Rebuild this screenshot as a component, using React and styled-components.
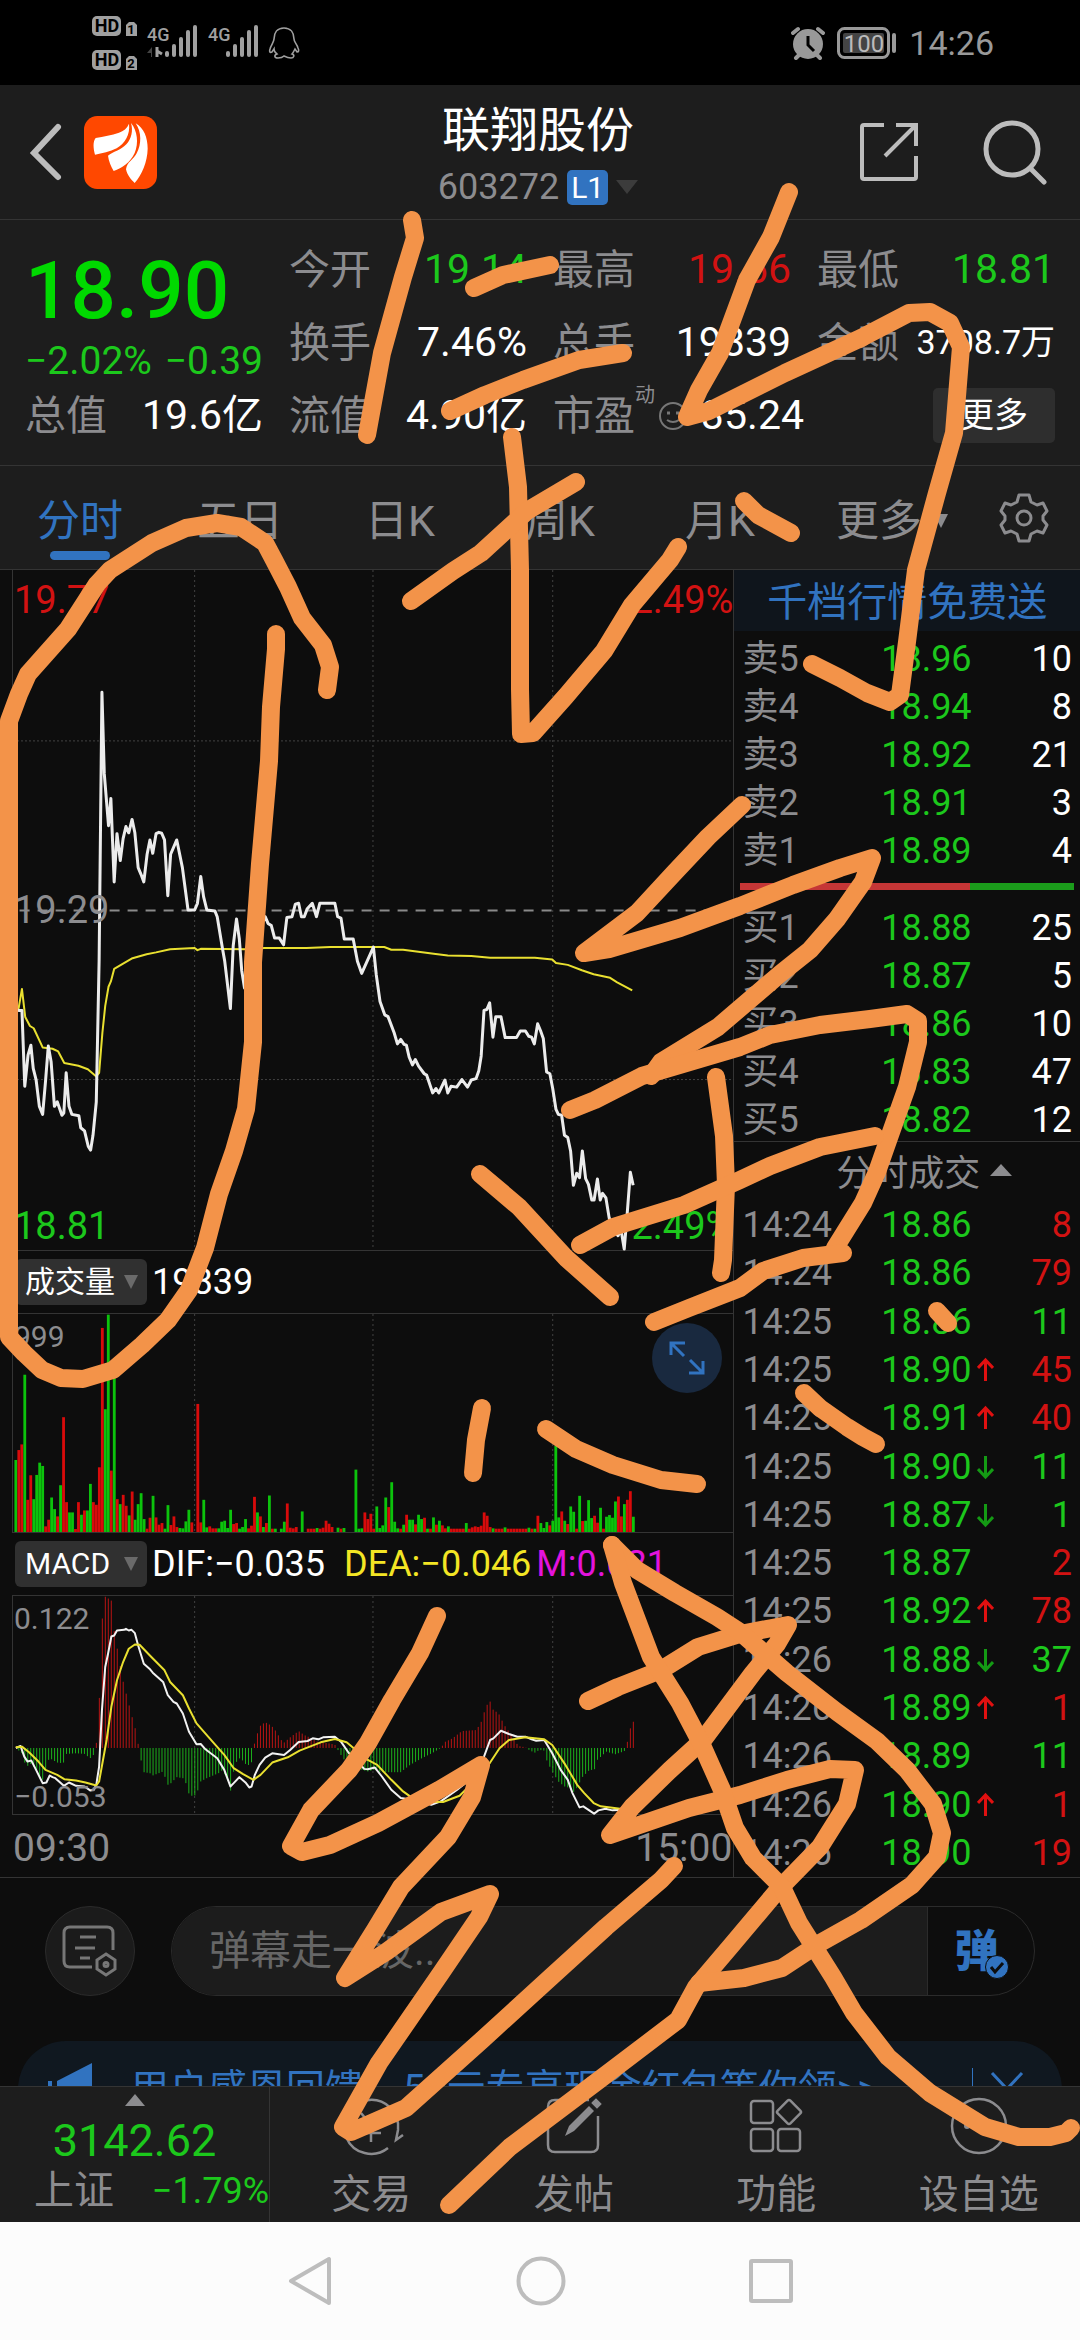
import React from "react";
import styled, { createGlobalStyle } from "styled-components";

const c = {
  bar: "#1d1d1d",
  base: "#0d0d0d",
  line: "#343434",
  grey: "#8c8c8f",
  green: "#1cc81c",
  red: "#d21212",
  blue: "#3173c0",
  icon: "#bcbcbc",
  ink: "#f39349",
};

const GlobalStyle = createGlobalStyle`
  *, *::before, *::after { box-sizing: border-box; }
  body { margin: 0; background: ${c.base}; }
  button, input { font: inherit; color: inherit; border: 0; padding: 0; margin: 0; background: none; }
`;

const Page = styled.div`
  position: relative;
  display: flex;
  flex-direction: column;
  min-height: 100vh;
  overflow: hidden;
  background: ${c.base};
  color: #fff;
  font-family: Roboto, "Noto Sans CJK SC", sans-serif;
  font-size: 36px;
`;

/* ---------- status bar ---------- */

const StatusBar = styled.div`
  display: flex;
  align-items: center;
  justify-content: space-between;
  height: 85px;
  padding: 0 86px 0 92px;
  background: #000;
  color: #999;
  font-size: 34px;
`;

const StatusGroup = styled.div`
  display: flex;
  align-items: center;
  gap: 12px;
`;

/* ---------- header ---------- */

const Header = styled.header`
  display: grid;
  grid-template-columns: 1fr auto 1fr;
  align-items: center;
  height: 135px;
  padding: 0 32px 0 28px;
  background: ${c.bar};
  border-bottom: 1px solid ${c.line};
`;

const HeaderSide = styled.div`
  display: flex;
  align-items: center;
  justify-content: ${(p) => (p.$end ? "flex-end" : "flex-start")};
  gap: ${(p) => (p.$end ? "64px" : "20px")};
`;

const IconButton = styled.button`
  display: flex;
  align-items: center;
  justify-content: center;
`;

const TitleBlock = styled.div`
  display: flex;
  flex-direction: column;
  align-items: center;
  padding-top: 6px;
`;

const Title = styled.h1`
  margin: 0;
  font-size: 48px;
  line-height: 64px;
  font-weight: 400;
`;

const CodeLine = styled.div`
  display: flex;
  align-items: center;
  gap: 8px;
  line-height: 48px;
  color: ${c.grey};
`;

const Level = styled.span`
  padding: 0 4px;
  border-radius: 5px;
  background: ${c.blue};
  color: #fff;
  font-size: 30px;
  line-height: 35px;
`;

const Caret = styled.span`
  width: 0;
  height: 0;
  border: ${(p) => p.$size || 7}px solid transparent;
  ${(p) =>
    p.$up
      ? `border-bottom: 12px solid ${p.$color || c.grey}; border-top: 0;`
      : `border-top: 14px solid ${p.$color || c.grey}; border-bottom: 0;`}
`;

/* ---------- quote ---------- */

const Quote = styled.section`
  display: grid;
  grid-template-columns: repeat(4, minmax(0, 1fr));
  grid-auto-rows: 73px;
  column-gap: 26px;
  padding: 13px 25px 13px;
  background: ${c.bar};
  border-bottom: 1px solid ${c.line};
`;

const PriceBlock = styled.div`
  grid-row: span 2;
  display: flex;
  flex-direction: column;
  white-space: nowrap;
`;

const Price = styled.div`
  color: #00d900;
  font-size: 80px;
  line-height: 116px;
  font-weight: 500;
`;

const Change = styled.div`
  display: flex;
  justify-content: space-between;
  color: ${c.green};
  font-size: 39px;
  line-height: 24px;
`;

const Fact = styled.div`
  display: flex;
  align-items: center;
  justify-content: ${(p) => (p.$start ? "flex-start" : "space-between")};
  white-space: nowrap;
`;

const FactLabel = styled.span`
  padding-bottom: 8px;
  color: ${c.grey};
  font-size: 41px;
`;

const FactValue = styled.span`
  color: ${(p) => p.$color || "#fff"};
  font-size: ${(p) => (p.$small ? "34px" : "41px")};
  line-height: 73px;
`;

const FactIcon = styled.svg`
  flex: none;
`;

const Sup = styled.sup`
  align-self: flex-start;
  color: ${c.grey};
  font-size: 20px;
  line-height: 32px;
`;

const MoreButton = styled.button`
  justify-self: end;
  align-self: center;
  width: 122px;
  height: 55px;
  border-radius: 5px;
  background: #2e2e2e;
  font-size: 34px;
  line-height: 55px;
`;

/* ---------- tabs ---------- */

const Tabs = styled.nav`
  display: grid;
  grid-template-columns: repeat(5, 20fr) 23fr 10fr;
  height: 104px;
  padding-right: 16px;
  background: ${c.bar};
  border-bottom: 1px solid ${c.line};
`;

const Tab = styled.button`
  display: flex;
  flex-direction: column;
  align-items: center;
  padding-top: 25px;
  color: ${(p) => (p.$active ? c.blue : c.grey)};
  font-size: 43px;
  line-height: 60px;
  &::after {
    content: "";
    width: 60px;
    height: 9px;
    border-radius: 5px;
    background: ${(p) => (p.$active ? c.blue : "transparent")};
  }
`;

const TabRow = styled.span`
  display: flex;
  align-items: center;
  gap: 12px;
`;

/* ---------- charts ---------- */

const Main = styled.main`
  display: grid;
  grid-template-columns: 68fr 32fr;
  border-bottom: 1px solid ${c.line};
`;

const Charts = styled.section`
  padding-left: 12px;
  border-right: 1px solid ${c.line};
`;

const ChartBox = styled.div`
  position: relative;
  height: ${(p) => p.$height}px;
  border: solid ${c.line};
  border-width: ${(p) => (p.$open ? "0 0 1px 1px" : "1px 0 1px 1px")};
`;

const Plot = styled.svg`
  display: block;
  width: 100%;
  height: 100%;
  overflow: visible;
`;

const Tag = styled.span`
  position: absolute;
  ${(p) => (p.$right ? "right: 0;" : "left: 1px;")}
  ${(p) => (p.$bottom ? "bottom: 2px;" : "top: 8px;")}
  color: ${(p) => p.$color || c.grey};
  font-size: ${(p) => (p.$small ? "30px" : "38px")};
  line-height: ${(p) => (p.$small ? "30px" : "44px")};
`;

const MidTag = styled(Tag)`
  top: 50%;
  transform: translateY(-50%);
`;

const Indicator = styled.div`
  display: flex;
  align-items: center;
  gap: 5px;
  height: 62px;
  white-space: nowrap;
`;

const Picker = styled.button`
  display: flex;
  align-items: center;
  justify-content: space-between;
  width: 132px;
  height: 46px;
  padding: 0 9px 0 10px;
  margin-left: 3px;
  border-radius: 6px;
  background: #303030;
  font-size: 30px;
  line-height: 42px;
`;

const Reading = styled.span`
  color: ${(p) => p.$color || "#fff"};
  margin-right: ${(p) => (p.$wide ? "14px" : "0")};
`;

const ExpandButton = styled.button`
  position: absolute;
  right: 11px;
  top: 9px;
  width: 70px;
  height: 70px;
  border-radius: 50%;
  background: #19293f;
  display: grid;
  place-items: center;
`;

const TimeAxis = styled.div`
  display: flex;
  justify-content: space-between;
  padding: 4px 1px 0;
  color: ${c.grey};
  font-size: 39px;
  line-height: 58px;
`;

/* ---------- order book ---------- */

const Side = styled.aside`
  display: flex;
  flex-direction: column;
`;

const Promo = styled.a`
  display: block;
  height: 61px;
  margin-bottom: 4px;
  background: #0f151c;
  color: ${c.blue};
  font-size: 40px;
  line-height: 66px;
  text-align: center;
  text-decoration: none;
  white-space: nowrap;
`;

const Table = styled.table`
  display: flex;
  flex-direction: column;
  flex: ${(p) => (p.$grow ? "1" : "none")};
  padding: 0 8px;
`;

const Body = styled.tbody`
  display: flex;
  flex-direction: column;
  flex: 1;
`;

const Row = styled.tr`
  display: grid;
  grid-template-columns: 8fr 7fr 4fr;
  align-items: center;
  flex: 1;
  min-height: 48px;
  line-height: 48px;
`;

const Cell = styled.td`
  display: flex;
  align-items: center;
  gap: 5px;
  padding: 0;
  color: ${(p) => p.$color || "#fff"};
  justify-content: ${(p) => (p.$end ? "flex-end" : "flex-start")};
`;

const Balance = styled.div`
  display: flex;
  height: 7px;
  margin: 8px 6px 14px;
`;

const BalancePart = styled.div`
  flex: ${(p) => p.$share};
  background: ${(p) => p.$color};
`;

const TradesHead = styled.button`
  display: flex;
  align-items: center;
  justify-content: center;
  gap: 10px;
  height: 60px;
  margin-top: -3px;
  padding: 0 0 4px 34px;
  border-top: 1px solid ${c.line};
  color: ${c.grey};
`;

/* ---------- comment bar, banner ---------- */

const Comment = styled.form`
  display: flex;
  gap: 36px;
  padding: 28px 45px 45px;
`;

const RoundButton = styled.button`
  display: grid;
  place-items: center;
  flex: none;
  width: 90px;
  height: 90px;
  border: 1px solid #2b2b2b;
  border-radius: 50%;
  background: #1b1b1b;
`;

const Pill = styled.div`
  display: flex;
  flex: 1;
  height: 90px;
  border: 1px solid #2b2b2b;
  border-radius: 45px;
  overflow: hidden;
`;

const CommentInput = styled.input`
  flex: 1;
  min-width: 0;
  padding-left: 37px;
  background: #1c1c1c;
  font-size: 41px;
  outline: 0;
  &::placeholder { color: #666; opacity: 1; }
`;

const BulletButton = styled.button`
  position: relative;
  width: 107px;
  padding: 0 9px 6px 0;
  border-left: 1px solid #2b2b2b;
  color: ${c.blue};
  font-size: 44px;
  font-weight: 900;
`;

const BulletCheck = styled.svg`
  position: absolute;
  left: 57px;
  top: 48px;
`;

const BannerClip = styled.div`
  height: 45px;
  padding: 0 18px;
  overflow: hidden;
`;

const Banner = styled.div`
  display: flex;
  align-items: center;
  height: 96px;
  padding: 0 38px 0 28px;
  border-radius: 48px;
  background: #101820;
  color: ${c.blue};
`;

const BannerLink = styled.a`
  flex: 1;
  margin-left: 36px;
  padding-bottom: 8px;
  color: inherit;
  font-size: 39px;
  text-decoration: none;
  white-space: nowrap;
`;

const Divider = styled.span`
  width: 1px;
  height: 42px;
  margin-right: 17px;
  background: ${c.blue};
`;

/* ---------- bottom navigation ---------- */

const BottomNav = styled.nav`
  display: grid;
  grid-template-columns: 4fr repeat(4, 3fr);
  height: 136px;
  background: ${c.bar};
  border-top: 1px solid ${c.line};
`;

const IndexButton = styled.button`
  display: flex;
  flex-direction: column;
  align-items: center;
  padding-top: 7px;
  border-right: 1px solid ${c.line};
  color: ${c.green};
`;

const IndexValue = styled.span`
  margin-top: 8px;
  font-size: 45px;
  line-height: 54px;
`;

const IndexRow = styled.span`
  display: flex;
  align-items: center;
  align-self: stretch;
  justify-content: space-between;
  padding-left: 34px;
  line-height: 46px;
`;

const NavItem = styled.button`
  display: flex;
  flex-direction: column;
  align-items: center;
  gap: 14px;
  padding-top: 10px;
  color: ${c.grey};
  font-size: 40px;
  line-height: 52px;
`;

const NavIcon = styled.svg`
  overflow: visible;
`;

const NavLabel = styled.span`
  color: ${c.grey};
  font-size: 40px;
`;

const SystemNav = styled.div`
  display: flex;
  align-items: center;
  justify-content: center;
  gap: 182px;
  flex: 1;
  min-height: 118px;
  background: #fcfcfc;
`;

const Ink = styled.svg`
  position: absolute;
  inset: 0;
  width: 100%;
  pointer-events: none;
`;

/* ---------- data ---------- */

const facts = [
  ["今开", "19.14", c.green],
  ["最高", "19.66", c.red],
  ["最低", "18.81", c.green],
  ["换手", "7.46%"],
  ["总手", "19839"],
  ["金额", "3708.7万", "#fff", true],
  ["总值", "19.6亿"],
  ["流值", "4.90亿"],
];

const sells = [
  ["卖5", "18.96", 10],
  ["卖4", "18.94", 8],
  ["卖3", "18.92", 21],
  ["卖2", "18.91", 3],
  ["卖1", "18.89", 4],
];
const buys = [
  ["买1", "18.88", 25],
  ["买2", "18.87", 5],
  ["买3", "18.86", 10],
  ["买4", "18.83", 47],
  ["买5", "18.82", 12],
];

const trades = [
  ["14:24", "18.86", "", 8, "r"],
  ["14:24", "18.86", "", 79, "r"],
  ["14:25", "18.86", "", 11, "g"],
  ["14:25", "18.90", "up", 45, "r"],
  ["14:25", "18.91", "up", 40, "r"],
  ["14:25", "18.90", "down", 11, "g"],
  ["14:25", "18.87", "down", 1, "g"],
  ["14:25", "18.87", "", 2, "r"],
  ["14:25", "18.92", "up", 78, "r"],
  ["14:26", "18.88", "down", 37, "g"],
  ["14:26", "18.89", "up", 1, "r"],
  ["14:26", "18.89", "", 11, "g"],
  ["14:26", "18.90", "up", 1, "r"],
  ["14:26", "18.90", "", 19, "r"],
];

const priceLine =
  "26,1005 38,1010 45,1010 51,1180 58,1110 64,1088 69,1140 75,1165 82,1225 89,1243 95,1170 101,1090 107,1125 114,1225 120,1215 130,1245 134,1240 139,1150 145,1225 151,1243 166,1246 170,1273 178,1280 186,1315 191,1323 196,1290 203,1215 209,900 215,297 220,480 229,596 234,535 241,722 247,614 254,674 260,625 266,598 272,612 279,582 285,612 292,690 298,705 304,722 311,660 317,628 323,658 330,614 336,611 342,613 348,628 355,753 361,660 374,628 386,690 398,785 412,785 418,770 425,710 431,755 438,785 455,787 460,800 471,870 476,900 488,1006 494,865 501,805 507,850 512,920 518,960 530,900 545,830 562,800 568,815 575,820 582,848 592,848 601,863 608,802 619,800 626,772 633,770 639,800 645,800 651,783 662,770 671,800 678,770 710,770 716,800 723,803 730,850 749,850 758,900 767,927 792,868 798,930 806,990 816,1020 823,1024 836,1060 843,1085 850,1075 857,1086 862,1088 868,1115 875,1132 881,1120 888,1135 900,1152 905,1155 918,1195 925,1185 931,1195 944,1166 950,1195 957,1180 969,1182 980,1165 992,1182 1000,1166 1010,1163 1016,1145 1021,1112 1027,1010 1033,1008 1039,993 1046,1070 1052,1024 1063,1024 1072,1071 1096,1071 1104,1056 1115,1056 1122,1068 1128,1070 1134,1085 1141,1040 1147,1055 1153,1073 1160,1148 1167,1152 1173,1185 1180,1232 1185,1243 1192,1245 1198,1290 1205,1295 1211,1325 1217,1402 1224,1375 1230,1385 1236,1325 1243,1387 1249,1400 1256,1435 1261,1435 1268,1388 1274,1435 1279,1420 1286,1430 1293,1475 1300,1500 1312,1515 1318,1500 1325,1545 1331,1470 1338,1373 1344,1402";

const averageLine =
  "26,1010 38,1005 45,962 52,1025 62,1045 70,1050 89,1093 110,1096 122,1102 135,1128 165,1134 185,1142 203,1158 209,1150 216,1060 222,1000 229,957 234,945 241,917 260,905 280,893 310,884 330,880 360,873 412,870 418,875 425,872 520,873 560,870 650,870 700,868 815,868 830,874 855,874 920,883 950,887 1000,888 1040,892 1135,892 1172,896 1180,904 1205,908 1235,920 1260,929 1295,937 1310,947 1342,965";

/* one entry a minute: positive is a falling minute, negative a rising one */
const volumes = [
  217, -247, -264, 474, -97, -171, 99, 172, 209, 199, -17, -37, 104, 69, -47, 141, -346, -90, 59, 59,
  -9, -90, 52, -65, 65, 145, -90, -82, -195, -615, 370, 655, -185, 477, -99, 84, -112, -79, 50, -122,
  37, 84, 117, 39, -10, -43, 109, -44, -22, -27, 10, 81, -21, -47, -15, 12, 11, 32, 67, -29,
  0, -386, -29, 97, 14, -17, -11, -11, 11, 31, 34, 12, 67, -24, -27, 10, 15, 39, -11, -19,
  -106, 59, -47, 15, -27, 110, -10, 10, 0, 10, 31, -86, -13, -11, -15, 0, 62, 0, -10, -10,
  -10, 12, -10, -13, -34, -25, -15, 0, 13, -10, 12, 0, 0, 0, 188, 10, 11, -59, -39, -55,
  -10, 77, 12, 20, 104, -75, 150, 31, 11, -10, 22, -52, 37, 37, -23, 52, 39, -43, 10, -10,
  44, -22, 34, -20, -11, 17, -10, -10, -10, -10, -10, 27, -10, -14, -17, -15, -19, -59, -49, -15,
  11, -10, -10, -10, 14, -10, -10, -10, -10, -10, -10, -10, 13, -10, 10, -49, 27, 12, 30, -20,
  34, 260, 44, -62, 34, -24, 77, 61, -10, 109, -33, 34, 96, 42, -49, -28, 73, -10, 46, 51,
  43, 92, -107, -47, 84, -97, -123, 46,
];

const macdEnvelope = [
  [32, 624], [45, 640], [51, 668], [57, 678], [64, 672], [76, 690], [83, 715], [89, 720], [95, 690], [101, 660],
  [108, 658], [120, 668], [133, 670], [139, 642], [160, 640], [178, 642], [190, 655], [197, 645], [201, 625], [203, 612],
  [209, 495], [215, 243], [222, 168], [228, 173], [235, 180], [241, 270], [247, 320], [253, 370], [260, 423], [266, 457],
  [279, 530], [285, 560], [292, 612], [296, 624], [298, 660], [304, 697], [317, 700], [323, 707], [345, 695], [355, 735],
  [362, 730], [374, 712], [387, 715], [393, 728], [399, 760], [406, 768], [412, 768], [418, 755], [425, 725], [438, 715],
  [463, 700], [469, 692], [480, 710], [488, 757], [494, 700], [500, 668], [507, 655], [513, 660], [520, 672], [532, 678],
  [535, 640], [537, 624], [539, 612], [545, 582], [551, 558], [558, 550], [566, 548], [577, 560], [583, 570], [596, 600],
  [602, 608], [615, 592], [633, 573], [645, 585], [653, 590], [672, 605], [697, 610], [710, 614], [714, 624], [723, 645],
  [735, 670], [750, 675], [767, 690], [780, 695], [800, 688], [806, 697], [850, 697], [870, 675], [895, 655], [920, 637],
  [935, 624], [945, 605], [960, 595], [980, 573], [1010, 570], [1020, 550], [1027, 518], [1033, 495], [1040, 484], [1046, 508],
  [1058, 520], [1070, 555], [1085, 585], [1100, 618], [1115, 622], [1125, 632], [1135, 638], [1145, 630], [1155, 632], [1160, 660],
  [1170, 690], [1185, 725], [1198, 740], [1211, 745], [1217, 757], [1224, 745], [1236, 712], [1250, 692], [1262, 688], [1268, 660],
  [1287, 635], [1306, 643], [1312, 640], [1325, 634], [1329, 624], [1331, 610], [1338, 565], [1345, 543],
];

const difLine =
  "32,624 42,618 50,650 57,665 65,662 75,690 89,730 97,728 104,707 110,712 116,715 134,738 145,728 160,738 178,740 190,752 198,750 203,735 209,680 215,510 222,380 228,340 235,288 241,285 247,270 262,268 266,265 272,270 278,268 285,278 292,315 304,370 316,385 323,397 345,425 355,465 367,485 374,490 387,520 400,575 416,613 425,612 435,628 460,655 475,690 488,740 495,730 507,712 520,728 528,743 533,740 540,705 550,675 562,653 577,640 602,645 615,630 633,606 652,603 663,595 675,598 685,592 710,590 723,605 740,640 760,665 772,687 780,688 795,683 810,710 830,750 850,775 875,780 915,795 935,785 970,750 1000,715 1015,690 1027,650 1040,600 1047,595 1063,572 1080,582 1098,590 1115,590 1128,598 1138,602 1155,600 1172,640 1190,690 1205,720 1215,760 1230,803 1238,800 1261,822 1270,812 1285,807 1300,812 1325,810 1344,790";

const deaLine =
  "32,622 45,620 60,637 80,665 95,690 120,705 135,718 160,722 180,728 203,737 209,725 216,670 225,600 235,500 247,420 260,365 272,325 285,312 295,313 320,350 348,390 360,425 387,465 400,505 416,550 450,605 475,645 495,685 515,703 537,720 552,705 577,668 610,652 635,632 680,607 710,597 735,607 780,660 800,675 830,720 855,755 875,775 900,785 940,787 975,768 1010,720 1040,668 1060,625 1080,600 1115,592 1155,598 1172,615 1200,675 1225,735 1240,760 1260,790 1275,800 1300,804 1320,808 1344,808";

const inkStrokes = [
  "412,220 415,238 403,277 382,353 367,435",
  "474,288 503,275 550,265",
  "450,411 485,395 523,380 579,360 623,353",
  "512,437 518,487 520,570 520,689 521,734 533,733 566,696 604,651 632,605 670,560 678,547",
  "411,601 453,571 481,553 527,511 576,482",
  "789,192 771,237 747,280 720,353 699,390 687,417 709,411 785,373 861,338 909,313 930,312 950,323 961,347 954,433 937,493 916,570 907,642 900,695 890,702 867,693 840,678 812,664",
  "744,501 758,515 791,533",
  "327,690 330,667 323,645 302,618 288,587 274,560 265,543 241,527 217,523 186,528 152,543 110,570 97,584 68,629 28,674 19,694 9,721 9,828 9,1260 9,1337 24,1353 42,1370 61,1378 83,1379 113,1370 142,1345 168,1320 189,1290 205,1248 219,1194 234,1151 246,1109 253,1042 253,962 260,864 269,761 271,707 276,649 276,634",
  "742,805 708,837 675,872 637,913 584,953 609,949 680,928 740,906 793,885 840,868 872,858 863,882 837,919 810,950 780,974 718,1027 661,1062 651,1076",
  "570,1110 595,1100 642,1076 740,1047 770,1035 820,1025 870,1019 907,1014 918,1021 918,1042 907,1087 890,1135 877,1172 863,1203 835,1248",
  "654,1322 689,1308 740,1288 763,1271 803,1258 843,1253",
  "716,1077 724,1136 726,1185 723,1260 721,1273",
  "580,1245 613,1227 684,1205 740,1180 770,1166 820,1147 875,1136",
  "480,1174 519,1207 566,1258 610,1297",
  "937,1311 948,1323",
  "804,1393 820,1408 847,1427 863,1437 876,1444",
  "482,1408 476,1440 473,1473",
  "546,1429 576,1449 613,1465 661,1480 697,1484",
  "437,1616 420,1653 392,1700 368,1743 349,1770 311,1810 291,1846 302,1852 330,1845 378,1823 439,1790 481,1765 472,1797 448,1837 401,1887 375,1930 345,1978 386,1952 441,1912 490,1894 479,1917 441,1973 379,2063 343,2127 351,2132 406,2108 482,2040 551,1977 606,1927 661,1880 674,1866",
  "588,1701 618,1687 661,1670 698,1647 740,1634 788,1625 777,1644 753,1673 703,1740 670,1770 632,1807 610,1835 651,1821 689,1808 740,1795 787,1780 830,1769 855,1770 847,1804 820,1847 778,1890 730,1947 696,1987 678,2020 599,2080 510,2147 449,2205",
  "612,1545 637,1570 675,1593 717,1617 740,1632 787,1673 837,1712 877,1741 907,1770 933,1804 942,1833 937,1857 912,1885 861,1920 820,1943 782,1968 744,1978 699,1983",
  "612,1545 623,1583 637,1620 651,1657 680,1703 701,1743 722,1790 735,1828 753,1858 782,1887 799,1923 833,1977 854,2013 888,2057 930,2093 985,2127 1019,2137 1050,2137 1066,2133 1071,2128",
];

const slot = (i) => 32 + i * 6.34;

function envelopeAt(x) {
  for (let i = 1; i < macdEnvelope.length; i += 1) {
    const [x1, y1] = macdEnvelope[i];
    if (x <= x1) {
      const [x0, y0] = macdEnvelope[i - 1];
      return y0 + ((x - x0) / (x1 - x0)) * (y1 - y0);
    }
  }
  return 624;
}

/* ---------- drawings ---------- */

function GridColumns({ top, bottom }) {
  return [412, 791, 1173].map((x) => (
    <line key={x} x1={x} x2={x} y1={top} y2={bottom} stroke="#424242" strokeDasharray="2 3" vectorEffect="non-scaling-stroke" />
  ));
}

function Line({ points, color, width = 2 }) {
  return <polyline points={points} fill="none" stroke={color} strokeWidth={width} strokeLinejoin="round" vectorEffect="non-scaling-stroke" />;
}

function PriceChart() {
  return (
    <Plot viewBox="26 23 1531 1524" preserveAspectRatio="none" role="img" aria-label="分时">
      <GridColumns top={23} bottom={1547} />
      {[406, 1165].map((y) => (
        <line key={y} x1="26" x2="1557" y1={y} y2={y} stroke="#424242" strokeDasharray="2 2" vectorEffect="non-scaling-stroke" />
      ))}
      <line x1="40" x2="1557" y1="786" y2="786" stroke="#8a8a8a" strokeWidth="2" strokeDasharray="10 8" vectorEffect="non-scaling-stroke" />
      <Line points={averageLine} color="#e9e030" />
      <Line points={priceLine} color="#ececec" width={3} />
    </Plot>
  );
}

function VolumeChart() {
  return (
    <Plot viewBox="26 220 1531 657" preserveAspectRatio="none" role="img" aria-label="成交量">
      <GridColumns top={220} bottom={877} />
      {volumes.map((v, i) => (
        <rect key={i} x={slot(i) - 3} y={877 - Math.abs(v)} width={6} height={Math.abs(v)} fill={v > 0 ? "#0cc30c" : "#d80b0b"} />
      ))}
    </Plot>
  );
}

function MacdChart() {
  return (
    <Plot viewBox="26 166 1531 657" preserveAspectRatio="none" role="img" aria-label="MACD">
      <GridColumns top={166} bottom={823} />
      {volumes.map((_, i) => {
        const y = envelopeAt(slot(i));
        return (
          <line key={i} x1={slot(i)} x2={slot(i)} y1="624" y2={y} stroke={y > 624 ? "#1cb01c" : "#b81414"} vectorEffect="non-scaling-stroke" />
        );
      })}
      <Line points={difLine} color="#f2f2f2" />
      <Line points={deaLine} color="#e9e030" />
    </Plot>
  );
}

function NetworkIcons() {
  const bars = (x) =>
    [6, 13, 20, 27, 32].map((h, i) => (
      <rect key={i} x={x + i * 7} y={57 - h} width="4" height={h} rx="2" fill="#a0a0a0" />
    ));
  return (
    <svg width="210" height="85" viewBox="92 0 210 85" fontFamily="Roboto, sans-serif" fontWeight="700">
      {[16, 50].map((y, i) => (
        <g key={y}>
          <rect x="92" y={y} width="29" height="20" rx="5" fill="#a0a0a0" />
          <text x="107" y={y + 16} fontSize="18" textAnchor="middle" fill="#000">HD</text>
          <path d={`M129 ${y + 6}h5l3 3v11h-11v-11z`} fill="#a0a0a0" />
          <text x="131" y={y + 18} fontSize="13" textAnchor="middle" fill="#000">{i + 1}</text>
        </g>
      ))}
      <text x="147" y="41" fontSize="18" fontWeight="500" fill="#a0a0a0" textAnchor="start">4G</text>
      <text x="208" y="41" fontSize="18" fontWeight="500" fill="#a0a0a0" textAnchor="start">4G</text>
      <path d="M147 53l5-6v10h-1v-4z" fill="#444" />
      <path d="M157 47v10M157 51l5 3" stroke="#a0a0a0" strokeWidth="3" />
      {bars(165)}
      {bars(226)}
      <path
        d="M284 28c-7 0-10 5-10 11 0 3-3 6-4 10-1 3 0 4 2 3l2-3c0 3 2 4 3 5-3 1-3 4 1 4 3 0 5-1 6-2 2 1 4 2 7 2 3 0 4-3 1-4 1-1 2-3 3-5l2 3c2 0 2-2 1-4-1-4-4-6-4-9 0-6-3-11-10-11z"
        fill="none" stroke="#a0a0a0" strokeWidth="1.6"
      />
    </svg>
  );
}

function AlarmIcon() {
  return (
    <svg width="34" height="34" viewBox="0 0 34 34">
      <path d="M9 28l-4 4M25 28l4 4" stroke="#999" strokeWidth="4" strokeLinecap="round" />
      <circle cx="17" cy="18" r="15" fill="#999" />
      <path d="M2 7l5-4M32 7l-5-4" stroke="#999" strokeWidth="4" strokeLinecap="round" />
      <path d="M17 10v9l6 6" stroke="#000" strokeWidth="3" fill="none" />
    </svg>
  );
}

function BatteryIcon() {
  return (
    <svg width="60" height="34" viewBox="0 0 60 34">
      <rect x="1.5" y="2.5" width="50" height="29" rx="6" fill="none" stroke="#999" strokeWidth="3" />
      <rect x="6" y="7" width="41" height="20" rx="2" fill="#444" />
      <path d="M57 9v16" stroke="#999" strokeWidth="4" strokeLinecap="round" />
      <text x="27" y="26" fontFamily="Roboto, sans-serif" fontSize="24" fill="#bbb" textAnchor="middle">100</text>
    </svg>
  );
}

function BackIcon() {
  return (
    <svg width="36" height="60" viewBox="0 0 36 60" fill="none" stroke={c.icon} strokeWidth="6">
      <path d="M30 5L6 31l24 24" strokeLinecap="round" />
    </svg>
  );
}

function Logo() {
  return (
    <svg width="73" height="73" viewBox="42 348 219 219">
      <rect x="42" y="348" width="219" height="219" rx="40" fill="#ff4800" />
      <g fill="#fff">
        <path d="M177 371C171 385 161 393 147 398C125 406 101 409 77 414C68 425 70 445 75 464C96 460 120 456 140 445C165 430 181 404 177 371z" />
        <path d="M183 369C190 392 184 417 169 433C152 451 129 455 114 467C116 483 123 500 131 513C157 504 180 488 194 459C207 430 202 392 183 369z" />
        <path d="M197 370C215 396 215 433 200 460C190 480 171 485 168 508C172 526 183 539 194 549C216 523 232 486 233 446C233 413 222 384 197 370z" />
      </g>
    </svg>
  );
}

function ShareIcon() {
  return (
    <svg width="58" height="58" viewBox="0 0 58 58" fill="none" stroke={c.icon} strokeWidth="4">
      <path d="M24 2H4Q2 2 2 4V54Q2 56 4 56H54Q56 56 56 54V33" />
      <path d="M36 2H56V23M55 3L25 33" />
    </svg>
  );
}

function SearchIcon() {
  return (
    <svg width="66" height="66" viewBox="0 0 66 66" fill="none" stroke={c.icon} strokeWidth="5">
      <circle cx="30" cy="30" r="26" />
      <path d="M48 49l14 14" strokeLinecap="round" />
    </svg>
  );
}

function GearIcon() {
  return (
    <svg width="50" height="50" viewBox="0 0 50 50" fill="none" stroke={c.grey} strokeWidth="3" strokeLinejoin="round">
      <path d="M20 2h10l2 7 6 3 6-2 4 8-4 5v4l4 5-4 8-6-2-6 3-2 7H20l-2-7-6-3-6 2-4-8 4-5v-4l-4-5 4-8 6 2 6-3z" />
      <circle cx="25" cy="25" r="7" />
    </svg>
  );
}

function SmileIcon() {
  return (
    <FactIcon width="46" height="30" viewBox="-3 0 46 30" fill="none" stroke="#777" strokeWidth="2">
      <circle cx="15" cy="15" r="13" />
      <path d="M9 12h3M18 12h3" strokeWidth="3" />
      <path d="M9 19q6 4 12 0" />
    </FactIcon>
  );
}

function ArrowIcon({ down }) {
  return (
    <svg width="17" height="26" viewBox="0 0 17 26" fill="none" stroke={down ? "#149a14" : "#e01010"} strokeWidth="3">
      <path d={down ? "M8.500 2v21M1 15l7.500 8 7.500-8" : "M8.500 24V3M1 11l7.500-8 7.500 8"} />
    </svg>
  );
}

function ExpandIcon() {
  return (
    <svg width="36" height="36" viewBox="0 0 36 36" fill="none" stroke={c.blue} strokeWidth="3">
      <path d="M2 15V3h14M3 4l12 12M34 21v12H20M33 32L21 20" />
    </svg>
  );
}

function NoteIcon() {
  return (
    <svg width="56" height="52" viewBox="0 0 56 52" fill="none" stroke="#777" strokeWidth="3">
      <path d="M51 25V8q0-6-6-6H8Q2 2 2 8v28q0 6 6 6h22" />
      <path d="M18 12h16M13 23h20M18 33h10" />
      <path d="M44 29l9 6v9l-9 6-9-6v-9z" />
      <circle cx="44" cy="39.500" r="2" />
    </svg>
  );
}

function HornIcon() {
  return (
    <svg width="48" height="56" viewBox="0 0 48 56" fill={c.blue}>
      <path d="M2 20h4v18H2zM11 20L46 2v52L11 38z" />
    </svg>
  );
}

const navIcons = {
  trade: (
    <>
      <path d="M46 51A27 27 0 1 1 56 33L54 43L61 38" />
      <path d="M19 16l10 12 10-12M29 28v17M20 36h19" />
    </>
  ),
  post: (
    <>
      <path d="M44 3H10q-7 0-7 7v38q0 7 7 7h36q7 0 7-7V19" />
      <path d="M20 39l4-10L44 9l5 5-20 20z" fill={c.grey} stroke="none" />
      <path d="M48 6l3-3 4 4-3 3z" fill={c.grey} />
    </>
  ),
  tools: (
    <>
      <rect x="4" y="4" width="22" height="22" rx="3" />
      <rect x="4" y="32" width="22" height="22" rx="3" />
      <rect x="31" y="32" width="22" height="22" rx="3" />
      <rect x="33" y="6" width="18" height="18" rx="2" transform="rotate(45 42 15)" />
    </>
  ),
  watch: (
    <>
      <circle cx="29" cy="29" r="27" />
      <path d="M17 29h0.010M29 29h0.010M41 29h0.010" strokeWidth="6" strokeLinecap="round" />
    </>
  ),
};

const navItems = [
  ["trade", "交易"],
  ["post", "发帖"],
  ["tools", "功能"],
  ["watch", "设自选"],
];

function Book({ rows }) {
  return (
    <Table>
      <Body>
        {rows.map(([name, price, size]) => (
          <Row key={name}>
            <Cell $color={c.grey}>{name}</Cell>
            <Cell $color={c.green}>{price}</Cell>
            <Cell $end>{size}</Cell>
          </Row>
        ))}
      </Body>
    </Table>
  );
}

export default function App() {
  return (
    <Page>
      <GlobalStyle />

      <StatusBar>
        <NetworkIcons />
        <StatusGroup>
          <AlarmIcon />
          <BatteryIcon />
          <span>14:26</span>
        </StatusGroup>
      </StatusBar>

      <Header>
        <HeaderSide>
          <IconButton aria-label="返回"><BackIcon /></IconButton>
          <Logo />
        </HeaderSide>
        <TitleBlock>
          <Title>联翔股份</Title>
          <CodeLine>
            603272<Level>L1</Level><Caret $size={11} $color="#3c3c3c" />
          </CodeLine>
        </TitleBlock>
        <HeaderSide $end>
          <IconButton aria-label="分享"><ShareIcon /></IconButton>
          <IconButton aria-label="搜索"><SearchIcon /></IconButton>
        </HeaderSide>
      </Header>

      <Quote>
        <PriceBlock>
          <Price>18.90</Price>
          <Change><span>−2.02%</span><span>−0.39</span></Change>
        </PriceBlock>
        {facts.map(([label, value, color, small]) => (
          <Fact key={label}>
            <FactLabel>{label}</FactLabel>
            <FactValue $color={color} $small={small}>{value}</FactValue>
          </Fact>
        ))}
        <Fact $start>
          <FactLabel>市盈</FactLabel>
          <Sup>动</Sup>
          <SmileIcon />
          <FactValue>35.24</FactValue>
        </Fact>
        <MoreButton>更多</MoreButton>
      </Quote>

      <Tabs>
        {["分时", "五日", "日K", "周K", "月K"].map((name, i) => (
          <Tab key={name} $active={i === 0}>{name}</Tab>
        ))}
        <Tab><TabRow>更多<Caret /></TabRow></Tab>
        <IconButton aria-label="设置"><GearIcon /></IconButton>
      </Tabs>

      <Main>
        <Charts>
          <ChartBox $height={681} $open>
            <PriceChart />
            <Tag $color={c.red}>19.77</Tag>
            <Tag $color={c.red} $right>2.49%</Tag>
            <MidTag>19.29</MidTag>
            <Tag $color={c.green} $bottom>18.81</Tag>
            <Tag $color={c.green} $right $bottom>−2.49%</Tag>
          </ChartBox>
          <Indicator>
            <Picker>成交量<Caret $color="#6a6a6a" /></Picker>
            <Reading>19839</Reading>
          </Indicator>
          <ChartBox $height={220}>
            <VolumeChart />
            <Tag $small>999</Tag>
            <ExpandButton aria-label="全屏"><ExpandIcon /></ExpandButton>
          </ChartBox>
          <Indicator>
            <Picker>MACD<Caret $color="#6a6a6a" /></Picker>
            <Reading $wide>DIF:−0.035</Reading>
            <Reading $color="#f3e524">DEA:−0.046</Reading>
            <Reading $color="#e313dc">M:0.021</Reading>
          </Indicator>
          <ChartBox $height={220}>
            <MacdChart />
            <Tag $small>0.122</Tag>
            <Tag $small $bottom>−0.053</Tag>
          </ChartBox>
          <TimeAxis><span>09:30</span><span>15:00</span></TimeAxis>
        </Charts>

        <Side>
          <Promo href="#level2">千档行情免费送</Promo>
          <Book rows={sells} />
          <Balance>
            <BalancePart $share={229} $color="#c53636" />
            <BalancePart $share={104} $color="#1b9c1b" />
          </Balance>
          <Book rows={buys} />
          <TradesHead>分时成交<Caret $up $size={11} /></TradesHead>
          <Table $grow>
            <Body>
              {trades.map(([time, price, move, size, tone], i) => (
                <Row key={i}>
                  <Cell $color={c.grey}>{time}</Cell>
                  <Cell $color={c.green}>
                    {price}
                    {move && <ArrowIcon down={move === "down"} />}
                  </Cell>
                  <Cell $end $color={tone === "r" ? c.red : c.green}>{size}</Cell>
                </Row>
              ))}
            </Body>
          </Table>
        </Side>
      </Main>

      <Comment>
        <RoundButton type="button" aria-label="弹幕设置"><NoteIcon /></RoundButton>
        <Pill>
          <CommentInput aria-label="弹幕" placeholder="弹幕走一波..." />
          <BulletButton type="button">
            弹
            <BulletCheck width="24" height="24" viewBox="0 0 24 24">
              <circle cx="12" cy="12" r="11.500" fill={c.blue} stroke={c.base} />
              <path d="M6 12l4 5 8-9" fill="none" stroke={c.base} strokeWidth="3" />
            </BulletCheck>
          </BulletButton>
        </Pill>
      </Comment>

      <BannerClip>
        <Banner>
          <HornIcon />
          <BannerLink href="#gift">用户感恩回馈，50元专享现金红包等你领&gt;&gt;</BannerLink>
          <Divider />
          <IconButton aria-label="关闭">
            <svg width="34" height="36" viewBox="0 0 34 36" fill="none" stroke={c.blue} strokeWidth="3">
              <path d="M2 2l15 16L32 2" />
            </svg>
          </IconButton>
        </Banner>
      </BannerClip>

      <BottomNav>
        <IndexButton>
          <Caret $up $size={10} />
          <IndexValue>3142.62</IndexValue>
          <IndexRow><NavLabel>上证</NavLabel>−1.79%</IndexRow>
        </IndexButton>
        {navItems.map(([icon, label]) => (
          <NavItem key={icon}>
            <NavIcon width="58" height="58" viewBox="0 0 58 58" fill="none" stroke={c.grey} strokeWidth="2.5">
              {navIcons[icon]}
            </NavIcon>
            {label}
          </NavItem>
        ))}
      </BottomNav>

      <SystemNav>
        <IconButton aria-label="后退">
          <svg width="48" height="52" viewBox="0 0 48 52" fill="none" stroke="#bdbdbd" strokeWidth="4">
            <path d="M43 4v44L5 26z" strokeLinejoin="round" />
          </svg>
        </IconButton>
        <IconButton aria-label="主屏幕">
          <svg width="50" height="50" viewBox="0 0 50 50" fill="none" stroke="#bdbdbd" strokeWidth="4">
            <circle cx="25" cy="25" r="22.500" />
          </svg>
        </IconButton>
        <IconButton aria-label="最近任务">
          <svg width="46" height="46" viewBox="0 0 46 46" fill="none" stroke="#bdbdbd" strokeWidth="4">
            <rect x="3" y="3" width="40" height="40" rx="1" />
          </svg>
        </IconButton>
      </SystemNav>

      <Ink viewBox="0 0 1080 2340" fill="none" stroke={c.ink} strokeWidth="18" strokeLinecap="round" strokeLinejoin="round" aria-hidden="true">
        {inkStrokes.map((points) => (
          <polyline key={points} points={points} />
        ))}
      </Ink>
    </Page>
  );
}
